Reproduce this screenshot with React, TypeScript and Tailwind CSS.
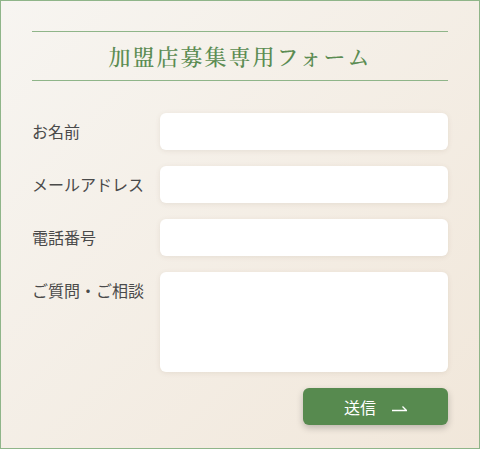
import React from "react";

const sans = { fontFamily: '"Noto Sans CJK JP", "Noto Sans", sans-serif' };
const serif = { fontFamily: '"Noto Serif CJK JP", "Noto Sans CJK JP", serif' };

function Row({ label, tall }: { label: string; tall?: boolean }) {
  return (
    <div className="flex items-start">
      <label className="w-[128px] shrink-0 pt-[6px] text-[16px] leading-6 text-[#4a4a4a]" style={sans}>
        {label}
      </label>
      {tall ? (
        <textarea className="h-[100px] flex-1 resize-none rounded-[6px] bg-white shadow-[0_1px_5px_rgba(120,100,70,0.12)] outline-none" />
      ) : (
        <input className="h-[37px] flex-1 rounded-[6px] bg-white shadow-[0_1px_5px_rgba(120,100,70,0.12)] outline-none" />
      )}
    </div>
  );
}

export default function App() {
  return (
    <div
      className="box-border h-[449px] w-[480px] border border-[#8fb589] bg-[linear-gradient(135deg,#f7f5f1_0%,#f1e7da_100%)] px-[31px] pt-[30px]"
      style={sans}
    >
      <div className="box-border flex h-[50px] items-center justify-center border-y border-[#8fb589]">
        <h1
          className="text-[22px] font-medium tracking-[2px] text-[#5b8c52] leading-none"
          style={serif}
        >
          加盟店募集専用フォーム
        </h1>
      </div>
      <form className="mt-[32px] flex flex-col gap-[16px]">
        <Row label="お名前" />
        <Row label="メールアドレス" />
        <Row label="電話番号" />
        <Row label="ご質問・ご相談" tall />
        <div className="flex justify-end">
          <button
            type="button"
            className="flex h-[37px] w-[145px] items-center justify-center gap-[16px] rounded-[6px] bg-[#578a4f] text-[16px] text-white shadow-[0_3px_7px_rgba(0,0,0,0.22)]"
            style={sans}
          >
            <span>送信</span>
            <svg width="15" height="8" viewBox="0 0 15 8" className="mt-[2px]">
              <path d="M0 6.5 H14.5 L10.5 2.5" fill="none" stroke="white" strokeWidth="1.3" />
            </svg>
          </button>
        </div>
      </form>
    </div>
  );
}
